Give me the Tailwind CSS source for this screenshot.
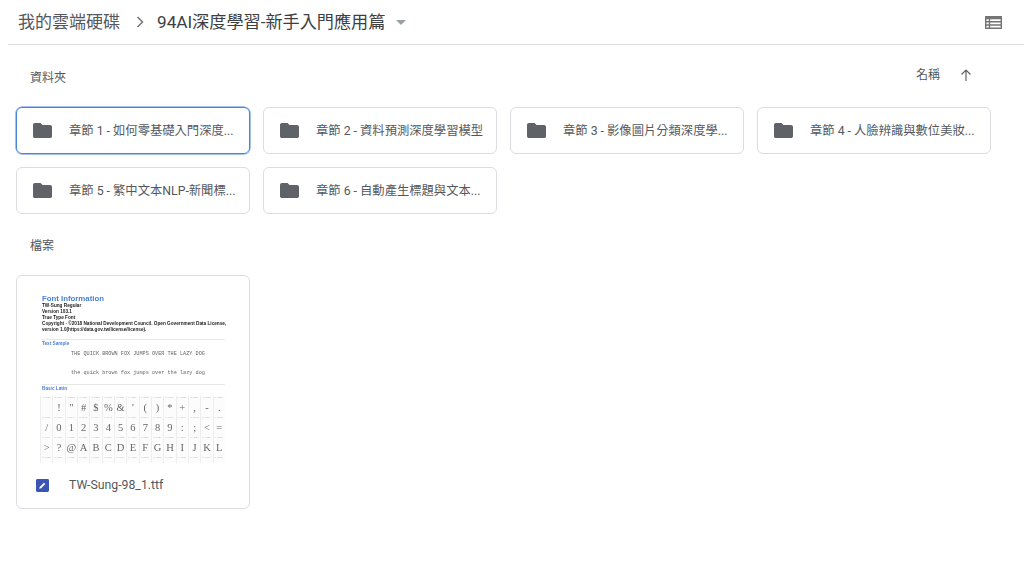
<!DOCTYPE html>
<html lang="zh-Hant">
<head>
  <meta charset="UTF-8">
  <title>94AI深度學習-新手入門應用篇</title>
  <script src="https://cdn.jsdelivr.net/npm/@tailwindcss/browser@4"></script>
</head>
<body class="h-[564px] w-[1024px] overflow-hidden bg-white font-['Roboto','Noto_Sans_CJK_TC',sans-serif] text-[#54585d]">
  <!-- Breadcrumb bar -->
  <header class="ml-2 flex h-[45px] items-center border-b border-[#dadce0] pb-[1px] pl-[10px] pr-[22px]">
    <span class="text-[17px] leading-6">我的雲端硬碟</span>
    <svg class="ml-[13px] mr-[10px] h-[14px] w-[14px]" viewBox="0 0 14 14" fill="none" stroke="#70757a" stroke-width="1.5"><path d="M4.5 2l5 5-5 5"/></svg>
    <span class="text-[17.15px] leading-6 text-[#3c4043]">94AI深度學習-新手入門應用篇</span>
    <svg class="ml-[11px] mt-[1px] h-[5px] w-[10px]" viewBox="0 0 10 5" fill="#9aa0a6"><path d="M0 0h10L5 5z"/></svg>
    <svg class="ml-auto mt-[1px] h-[13px] w-[17px]" viewBox="0 0 18 14" preserveAspectRatio="none" fill="#757575"><path fill-rule="evenodd" d="M0 0h18v14H0zM1.5 3.5v2H4v-2zm4 0v2h11v-2zm-4 3.5v2H4V7zm4 0v2h11V7zm-4 3.5v2H4v-2zm4 0v2h11v-2z"/></svg>
  </header>

  <main class="pl-4 pr-[33px]">
    <div class="flex h-[62px] items-center justify-between pb-[2px] pl-[14px] pr-[19px]">
      <span class="mt-[5px] text-xs leading-4">資料夾</span>
      <div class="flex items-center gap-[20px]">
        <span class="text-xs leading-4">名稱</span>
        <svg class="mb-[1px] h-3 w-3" viewBox="0 0 12 12" fill="none" stroke="#5f6368" stroke-width="1.2"><path d="M6 12V1M1.5 5.5L6 1l4.5 4.5"/></svg>
      </div>
    </div>

    <div class="grid grid-cols-[repeat(4,234px)] gap-x-[13px] gap-y-[13px]">
      <div class="flex h-[47px] items-center rounded-md border border-[#4a86d8] pl-4 pr-2 shadow-[0_0_0_0.5px_#4a86d8]">
        <svg class="h-[15px] w-[19px] shrink-0" viewBox="0 0 20 16" preserveAspectRatio="none" fill="#5f6368"><path d="M8 0H2C.9 0 0 .9 0 2v12c0 1.1.9 2 2 2h16c1.1 0 2-.9 2-2V4c0-1.1-.9-2-2-2h-8z"/></svg>
        <span class="ml-[17px] mt-[1px] whitespace-nowrap text-[12.3px]">章節 1 - 如何零基礎入門深度...</span>
      </div>
      <div class="flex h-[47px] items-center rounded-md border border-[#dadce0] pl-4 pr-2">
        <svg class="h-[15px] w-[19px] shrink-0" viewBox="0 0 20 16" preserveAspectRatio="none" fill="#5f6368"><path d="M8 0H2C.9 0 0 .9 0 2v12c0 1.1.9 2 2 2h16c1.1 0 2-.9 2-2V4c0-1.1-.9-2-2-2h-8z"/></svg>
        <span class="ml-[17px] mt-[1px] whitespace-nowrap text-[12.3px]">章節 2 - 資料預測深度學習模型</span>
      </div>
      <div class="flex h-[47px] items-center rounded-md border border-[#dadce0] pl-4 pr-2">
        <svg class="h-[15px] w-[19px] shrink-0" viewBox="0 0 20 16" preserveAspectRatio="none" fill="#5f6368"><path d="M8 0H2C.9 0 0 .9 0 2v12c0 1.1.9 2 2 2h16c1.1 0 2-.9 2-2V4c0-1.1-.9-2-2-2h-8z"/></svg>
        <span class="ml-[17px] mt-[1px] whitespace-nowrap text-[12.3px]">章節 3 - 影像圖片分類深度學...</span>
      </div>
      <div class="flex h-[47px] items-center rounded-md border border-[#dadce0] pl-4 pr-2">
        <svg class="h-[15px] w-[19px] shrink-0" viewBox="0 0 20 16" preserveAspectRatio="none" fill="#5f6368"><path d="M8 0H2C.9 0 0 .9 0 2v12c0 1.1.9 2 2 2h16c1.1 0 2-.9 2-2V4c0-1.1-.9-2-2-2h-8z"/></svg>
        <span class="ml-[17px] mt-[1px] whitespace-nowrap text-[12.3px]">章節 4 - 人臉辨識與數位美妝...</span>
      </div>
      <div class="flex h-[47px] items-center rounded-md border border-[#dadce0] pl-4 pr-2">
        <svg class="h-[15px] w-[19px] shrink-0" viewBox="0 0 20 16" preserveAspectRatio="none" fill="#5f6368"><path d="M8 0H2C.9 0 0 .9 0 2v12c0 1.1.9 2 2 2h16c1.1 0 2-.9 2-2V4c0-1.1-.9-2-2-2h-8z"/></svg>
        <span class="ml-[17px] mt-[1px] whitespace-nowrap text-[12.3px]">章節 5 - 繁中文本NLP-新聞標...</span>
      </div>
      <div class="flex h-[47px] items-center rounded-md border border-[#dadce0] pl-4 pr-2">
        <svg class="h-[15px] w-[19px] shrink-0" viewBox="0 0 20 16" preserveAspectRatio="none" fill="#5f6368"><path d="M8 0H2C.9 0 0 .9 0 2v12c0 1.1.9 2 2 2h16c1.1 0 2-.9 2-2V4c0-1.1-.9-2-2-2h-8z"/></svg>
        <span class="ml-[17px] mt-[1px] whitespace-nowrap text-[12.3px]">章節 6 - 自動產生標題與文本...</span>
      </div>
    </div>

    <div class="flex h-[61px] items-center pl-[14px]">
      <span class="mt-[2px] text-xs leading-4">檔案</span>
    </div>

    <!-- File card -->
    <div class="flex h-[234px] w-[234px] flex-col rounded-md border border-[#dadce0]">
      <div class="h-[187px] overflow-hidden pl-[25px] pr-6 pt-[18px] blur-[0.35px]">
        <div class="font-['Liberation_Sans',sans-serif] text-[4.7px] font-bold leading-[6px] text-[#222]">
          <p class="text-[7.8px] leading-[9px] text-[#4a7fd4]">Font Information</p>
          <p>TW-Sung Regular</p>
          <p>Version 103.1</p>
          <p>True Type Font</p>
          <p class="whitespace-nowrap">Copyright - ©2018 National Development Council. Open Government Data License,</p>
          <p class="whitespace-nowrap">version 1.0(https://data.gov.tw/license/license).</p>
        </div>
        <div class="mt-[6px] border-t border-[#e8e8e8] pt-[1px] font-['Liberation_Sans',sans-serif] text-[4.7px] font-bold leading-[6px] text-[#4a7fd4]">Text Sample</div>
        <p class="mt-[3px] whitespace-nowrap pl-[29px] font-['Liberation_Mono',monospace] text-[5.2px] leading-[8px] text-[#666]">THE QUICK BROWN FOX JUMPS OVER THE LAZY DOG</p>
        <p class="mt-[11px] whitespace-nowrap pl-[29px] font-['Liberation_Mono',monospace] text-[5.2px] leading-[8px] text-[#666]">the quick brown fox jumps over the lazy dog</p>
        <div class="mt-[7px] border-t border-[#e8e8e8] pt-[1px] font-['Liberation_Sans',sans-serif] text-[4.7px] font-bold leading-[6px] text-[#4a7fd4]">Basic Latin</div>
        <div id="glyphs" class="-ml-[2px] mt-[4px] grid h-[68px] w-[185px] grid-cols-[repeat(15,12.33px)] content-start overflow-hidden"></div>
      </div>
      <div class="flex flex-1 items-center pb-[1px] pl-[19px]">
        <svg class="h-[13px] w-[13px]" viewBox="0 0 14 14"><rect width="14" height="14" rx="1.5" fill="#3b55b5"/><path d="M3.5 10.5l.5-2 4.5-4.5 1.5 1.5L5.5 10z" fill="#fff"/></svg>
        <span class="ml-5 text-[12.3px]">TW-Sung-98_1.ttf</span>
      </div>
    </div>
  </main>

  <script>
    // Character table of the font preview
    const glyphs = [' ', '!', '"', '#', '$', '%', '&', "'", '(', ')', '*', '+', ',', '-', '.',
      '/', '0', '1', '2', '3', '4', '5', '6', '7', '8', '9', ':', ';', '<', '=',
      '>', '?', '@', 'A', 'B', 'C', 'D', 'E', 'F', 'G', 'H', 'I', 'J', 'K', 'L',
      'M', 'N', 'O', 'P', 'Q', 'R', 'S', 'T', 'U', 'V', 'W', 'X', 'Y', 'Z', '['];
    document.getElementById('glyphs').innerHTML = glyphs.map((g, i) => `
      <div class="h-[20px] overflow-hidden border-l border-[#eeeeee] bg-[#fcfcfc] text-center font-['Liberation_Serif',serif] text-[#666]">
        <div class="h-[5px] pl-[1px] text-left text-[2.5px] leading-[4px] text-[#aaa]">U+${(32 + i).toString(16).padStart(4, '0').toUpperCase()}</div>
        <div class="text-[10.5px] leading-[14px]">${g === '<' ? '&lt;' : g === '&' ? '&amp;' : g}</div>
      </div>`).join('');
  </script>
</body>
</html>
